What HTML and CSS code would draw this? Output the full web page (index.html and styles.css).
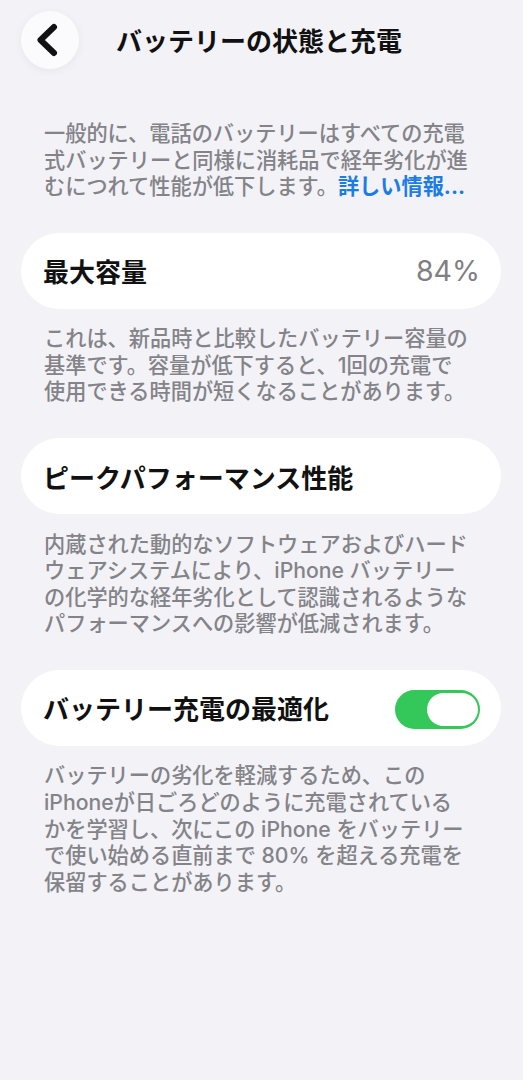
FILE: index.html
```html
<!DOCTYPE html>
<html lang="ja">
<head>
<meta charset="utf-8">
<title>バッテリーの状態と充電</title>
<link rel="stylesheet" href="styles.css">
</head>
<body>
<div class="page">
  <header class="nav">
    <button class="back" aria-label="戻る">
      <svg width="58" height="58" viewBox="0 0 58 58"><path d="M33 16 L19.5 29 L33 42" fill="none" stroke="#111" stroke-width="6" stroke-linecap="round" stroke-linejoin="round"/></svg>
    </button>
    <h1 class="title">バッテリーの状態と充電</h1>
  </header>

  <p class="note intro">一般的に、電話のバッテリーはすべての充電式バッテリーと同様に消耗品で経年劣化が進むにつれて性能が低下します。<a class="link" href="#">詳しい情報...</a></p>

  <section class="group">
    <div class="card">
      <span class="label">最大容量</span>
      <span class="value">84%</span>
    </div>
    <p class="note">これは、新品時と比較したバッテリー容量の基準です。容量が低下すると、1回の充電で使用できる時間が短くなることがあります。</p>
  </section>

  <section class="group">
    <div class="card">
      <span class="label">ピークパフォーマンス性能</span>
    </div>
    <p class="note">内蔵された動的なソフトウェアおよびハードウェアシステムにより、iPhone バッテリーの化学的な経年劣化として認識されるようなパフォーマンスへの影響が低減されます。</p>
  </section>

  <section class="group">
    <div class="card">
      <span class="label">バッテリー充電の最適化</span>
      <span class="toggle"><span class="knob"></span></span>
    </div>
    <p class="note">バッテリーの劣化を軽減するため、この iPhoneが日ごろどのように充電されているかを学習し、次にこの iPhone をバッテリーで使い始める直前まで 80% を超える充電を保留することがあります。</p>
  </section>
</div>
</body>
</html>
```

FILE: styles.css
```css
html, body {
  margin: 0;
  padding: 0;
  background: #f2f2f7;
}

body {
  font-family: "Inter", "Noto Sans CJK JP", sans-serif;
  color: #000;
  min-height: 1080px;
}

.page {
  padding: 11px 22px 0 21px;
}

.nav {
  display: flex;
  align-items: center;
  gap: 37px;
  height: 58px;
}

.back {
  width: 58px;
  height: 58px;
  padding: 0;
  border: none;
  border-radius: 50%;
  background: #fbfbfd;
  box-shadow: 0 2px 10px rgba(0, 0, 0, 0.05);
  display: flex;
  align-items: center;
  justify-content: center;
  flex: none;
}

.back svg {
  display: block;
}

.title {
  margin: 0;
  font-family: "Noto Sans CJK JP", sans-serif;
  font-size: 26px;
  font-weight: 700;
  color: #111;
  line-height: 1;
  white-space: nowrap;
}

.note {
  margin: 16.5px 0 0;
  padding: 0 31px 0 23px;
  font-size: 21.2px;
  line-height: 26.6px;
  color: #838388;
  font-weight: 500;
  word-break: normal;
  line-break: strict;
}

.intro {
  margin-top: 51px;
}

.link {
  color: #1c7ce6;
  text-decoration: none;
  font-weight: 700;
}

.group {
  margin-top: 33px;
}

.card {
  height: 76px;
  border-radius: 38px;
  background: #fff;
  box-sizing: border-box;
  padding: 0 21px 0 22px;
  display: flex;
  align-items: center;
  justify-content: space-between;
}

.label {
  font-family: "Noto Sans CJK JP", sans-serif;
  font-size: 26px;
  font-weight: 700;
  color: #111;
}

.value {
  font-family: "Inter", sans-serif;
  font-size: 28.5px;
  font-weight: 400;
  color: #7f7f84;
}

.toggle {
  position: relative;
  width: 85px;
  height: 39px;
  border-radius: 20px;
  background: #34c759;
  flex: none;
  margin-top: 3px;
}

.knob {
  position: absolute;
  top: 3px;
  right: 2px;
  width: 51px;
  height: 33px;
  border-radius: 17px;
  background: #fff;
}
```
